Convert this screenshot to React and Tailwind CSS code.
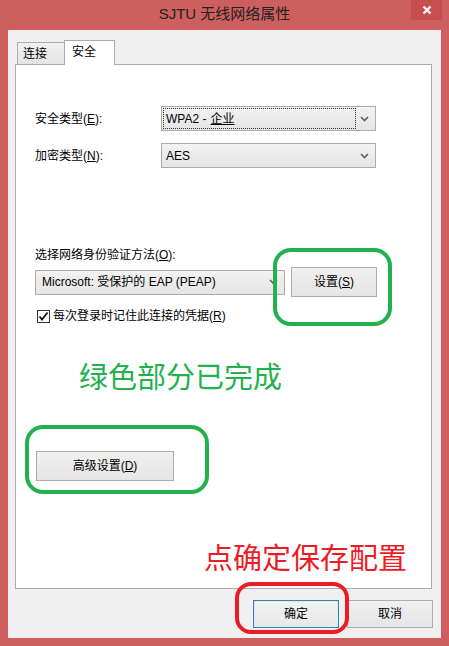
import React from "react";

const font = { fontFamily: '"Liberation Sans", "Noto Sans CJK SC", sans-serif' };

function Chevron() {
  return (
    <svg width="9" height="6" viewBox="0 0 9 6" className="shrink-0">
      <polyline points="1,1 4.5,4.5 8,1" fill="none" stroke="#606060" strokeWidth="1.6" />
    </svg>
  );
}

function Select({ children, width, focus }) {
  return (
    <div
      className={`${width} h-[25px] border border-[#acacac] bg-gradient-to-b from-[#f2f2f2] to-[#e5e5e5] flex items-center p-[1px]`}
    >
      <div
        className={`flex-1 h-full flex items-center pl-[2px] text-[12px] text-black leading-none ${
          focus ? "border border-dotted border-[#333]" : "border border-transparent"
        }`}
      >
        {children}
      </div>
      <div className="w-[18px] flex items-center justify-center pr-[2px]">
        <Chevron />
      </div>
    </div>
  );
}

function Button({ children, className = "", primary }) {
  return (
    <div
      className={`${className} flex items-center justify-center text-[12px] text-black ${
        primary
          ? "border border-[#3c7fb1] bg-gradient-to-b from-[#f2f2f2] to-[#e8e8e8] shadow-[inset_0_0_0_1px_#d8ecf8]"
          : "border border-[#acacac] bg-gradient-to-b from-[#f0f0f0] to-[#e5e5e5]"
      }`}
    >
      {children}
    </div>
  );
}

export default function App() {
  return (
    <div className="relative w-[449px] h-[646px] bg-[#cd5f5f] flex flex-col overflow-hidden" style={font}>
      {/* title bar */}
      <div className="h-[30px] shrink-0 flex items-center justify-center text-[15px] text-[#222] pb-[1px]">
        SJTU 无线网络属性
      </div>
      <div className="absolute left-[411px] top-0 w-[31px] h-[20px] bg-[#c74f50] flex items-center justify-center">
        <svg width="10" height="10" viewBox="0 0 10 10">
          <path d="M1.5 1.5 L8.5 8.5 M8.5 1.5 L1.5 8.5" stroke="#fff" strokeWidth="2.2" />
        </svg>
      </div>

      {/* client area */}
      <div className="mx-[8px] h-[608px] bg-[#f0f0f0] flex flex-col">
        {/* tabs */}
        <div className="flex items-end ml-[9px] mt-[10px] h-[24px]">
          <div className="w-[47px] h-[22px] border border-[#acacac] border-b-0 border-r-0 bg-gradient-to-b from-[#f0f0f0] to-[#e5e5e5] text-[12px] text-black pl-[5px] flex items-center">
            连接
          </div>
          <div className="relative z-10 w-[51px] h-[25px] -mb-px border border-[#acacac] border-b-0 bg-white text-[12px] text-black pl-[7px] flex items-center pb-[2px]">
            安全
          </div>
        </div>

        {/* panel */}
        <div className="ml-[7px] w-[417px] h-[525px] border border-[#acacac] bg-white pl-[19px] pt-[41px] flex flex-col text-[12px] text-black">
          <div className="flex items-center h-[25px]">
            <div className="w-[126px]">
              安全类型(<span className="underline">E</span>):
            </div>
            <Select width="w-[215px]" focus>
              WPA2 - <span className="underline ml-[4px]">企业</span>
            </Select>
          </div>
          <div className="flex items-center h-[25px] mt-[12px]">
            <div className="w-[126px]">
              加密类型(<span className="underline">N</span>):
            </div>
            <Select width="w-[215px]">AES</Select>
          </div>

          <div className="mt-[79px] h-[16px] leading-[16px]">
            选择网络身份验证方法(<span className="underline">O</span>):
          </div>
          <div className="flex items-center gap-[6px] mt-[4px] h-[30px]">
            <Select width="w-[250px]">
              <span className="pl-[2px]">Microsoft: 受保护的 EAP (PEAP)</span>
            </Select>
            <Button className="w-[86px] h-[30px]">
              设置(<span className="underline">S</span>)
            </Button>
          </div>
          <div className="flex items-center mt-[11px] h-[16px] ml-[2px] gap-[3px]">
            <div className="w-[13px] h-[13px] border border-[#333] bg-white flex items-center justify-center">
              <svg width="11" height="11" viewBox="0 0 11 11">
                <polyline points="1.5,5.5 4,8.5 9.5,1.5" fill="none" stroke="#111" strokeWidth="1.8" />
              </svg>
            </div>
            <div className="leading-[16px]">
              每次登录时记住此连接的凭据(<span className="underline">R</span>)
            </div>
          </div>

          <div className="mt-[36px] ml-[44px] h-[36px] leading-[36px] text-[29px] text-[#22b14c]">
            绿色部分已完成
          </div>

          <Button className="mt-[55px] ml-[1px] w-[138px] h-[30px]">
            高级设置(<span className="underline">D</span>)
          </Button>

          <div className="mt-[60px] ml-[169px] h-[36px] leading-[36px] text-[29px] text-[#ed1c24]">
            点确定保存配置
          </div>
        </div>

        {/* bottom buttons */}
        <div className="flex justify-end gap-[8px] mt-[11px] pr-[8px]">
          <Button primary className="w-[86px] h-[28px]">
            确定
          </Button>
          <Button className="w-[86px] h-[28px]">取消</Button>
        </div>
      </div>

      {/* annotation marks */}
      <div className="absolute left-[273px] top-[248px] w-[119px] h-[78px] border-[4px] border-[#22b14c] rounded-[18px]" />
      <div className="absolute left-[25px] top-[425px] w-[184px] h-[69px] border-[4px] border-[#22b14c] rounded-[18px]" />
      <div className="absolute left-[235px] top-[582px] w-[114px] h-[52px] border-[4px] border-[#ed1c24] rounded-[16px]" />
    </div>
  );
}
